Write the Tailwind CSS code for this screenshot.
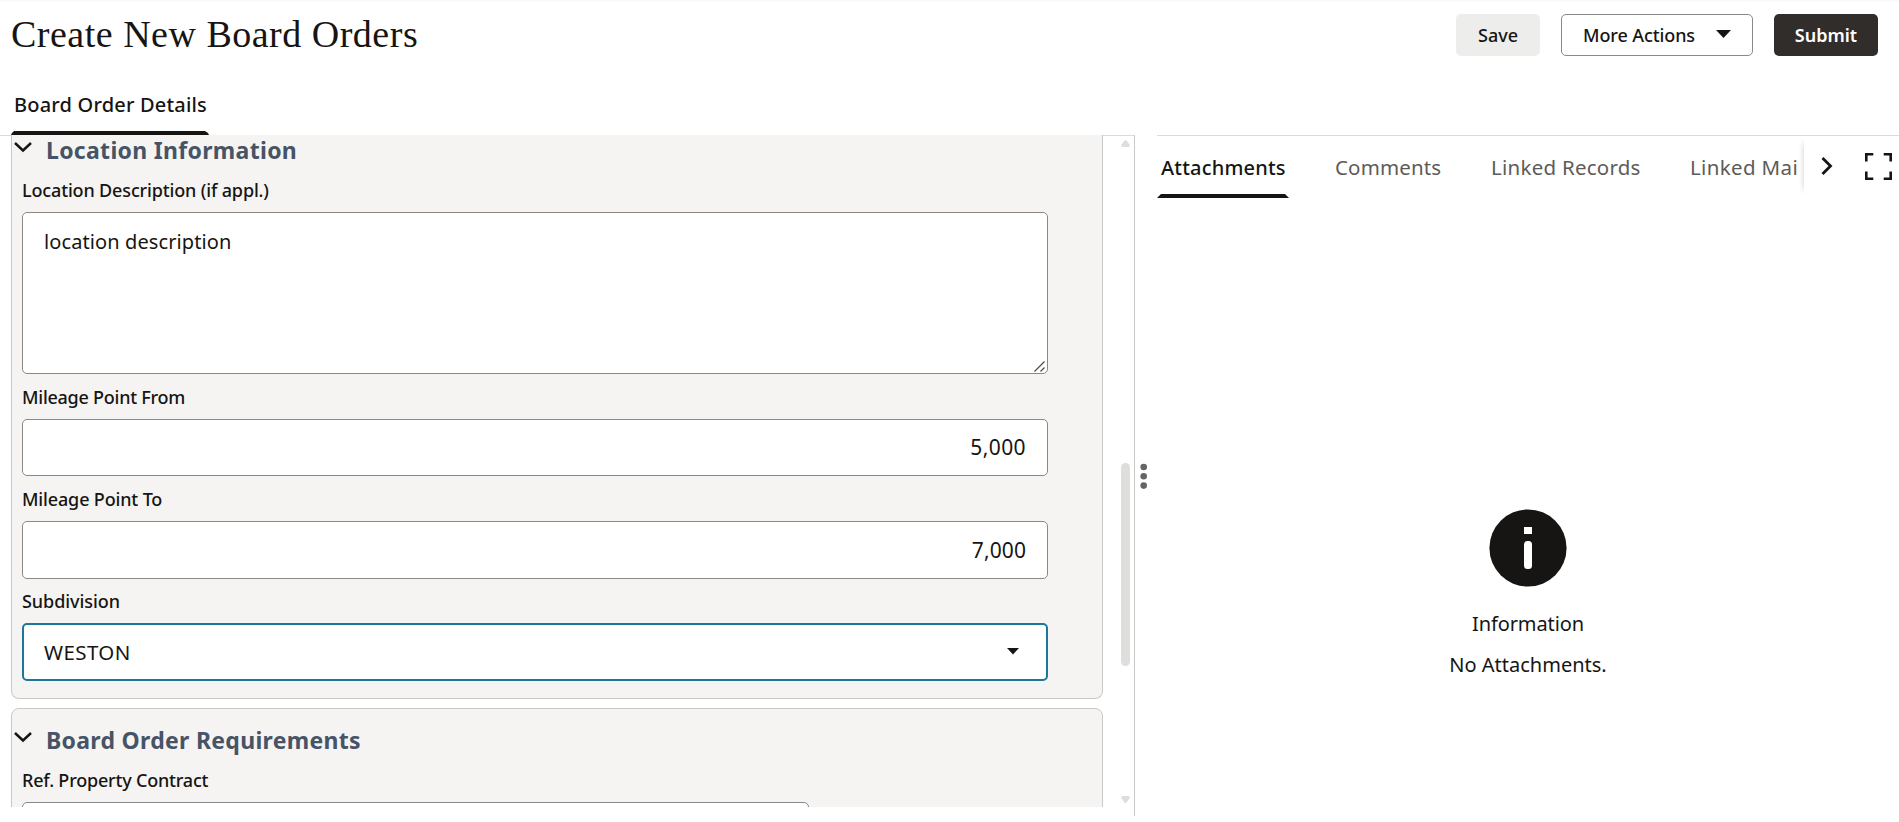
<!DOCTYPE html>
<html lang="en">
<head>
<meta charset="utf-8">
<title>Create New Board Orders</title>
<script src="https://cdn.jsdelivr.net/npm/@tailwindcss/browser@4"></script>
</head>
<body class="flex h-[822px] w-[1899px] flex-col overflow-hidden border-t-2 border-[#fafafa] bg-white font-['Noto_Sans',sans-serif] text-[#161513]">
  <!-- Page header -->
  <header class="flex h-[68px] shrink-0 items-start justify-between pt-3 pr-[21px] pl-[11px]">
    <h1 class="-mt-[3px] font-['Liberation_Serif',serif] text-[38px] leading-[47px] tracking-[0.5px] whitespace-nowrap">Create New Board Orders</h1>
    <div class="flex gap-[21px] text-lg leading-[42px] font-medium whitespace-nowrap">
      <button class="h-[42px] w-[84px] rounded-[5px] bg-[#ededeb]">Save</button>
      <button class="flex h-[42px] w-[192px] items-center justify-between rounded-[5px] border border-[#8b8886] pr-[21px] pl-[21px] tracking-[-0.1px]">
        More Actions
        <svg class="mb-[2px] h-2 w-[15px]" viewBox="0 0 15 8"><path d="M0 0h15L7.500 8z" fill="#161513"/></svg>
      </button>
      <button class="h-[42px] w-[104px] rounded-[5px] bg-[#312d2a] font-semibold text-white">Submit</button>
    </div>
  </header>

  <!-- Page tabs -->
  <nav class="flex h-[65px] shrink-0 items-end pl-[11px]">
    <div class="flex w-[198px] flex-col">
      <span class="pb-[11px] pl-[3px] text-xl leading-[30px] font-medium tracking-[0.19px] whitespace-nowrap">Board Order Details</span>
      <svg class="h-1 w-[198px]" viewBox="0 0 198 4"><path d="M0 4L1 2 3 0h191l3 2 1 2z" fill="#161513"/></svg>
    </div>
  </nav>

  <main class="flex h-[681px] shrink-0">
    <!-- Form -->
    <section class="flex w-[1135px] shrink-0 border-t border-r border-[#c8c8c8] border-t-[#dcdbda]">
      <div class="-mt-px h-[672px] w-[1103px] shrink-0 overflow-hidden pl-[11px]">
        <div class="h-[564px] rounded-b-[8px] border border-t-0 border-[#c9c8c8] bg-[#f5f4f2]">
          <div class="flex h-8 items-start">
            <svg class="mt-[6px] ml-[2px] h-3 w-[18px]" viewBox="0 0 18 12"><path d="M1 2l8 7.5L17 2" fill="none" stroke="#161513" stroke-width="2.4"/></svg>
            <h2 class="-mt-[1px] ml-[14px] text-[23px] leading-8 font-bold tracking-[0.31px] whitespace-nowrap text-[#475366]">Location Information</h2>
          </div>
          <div class="flex flex-col pl-[10px] text-lg font-medium whitespace-nowrap">
            <label class="pt-px leading-[44px] tracking-[-0.15px]">Location Description (if appl.)</label>
            <div class="flex h-[162px] w-[1026px] justify-between rounded-[5px] border border-[#8b8886] bg-white pt-[15px] pl-[21px] text-xl leading-7 font-normal tracking-[0.1px]">
              <span>location description</span>
              <svg class="mr-[2px] mb-px h-[11px] w-[11px] self-end" viewBox="0 0 11 11"><path d="M.5 10.500l10-10M6.500 10.500l4-4" fill="none" stroke="#4b4b4b" stroke-width="1.200"/></svg>
            </div>
            <label class="pt-px leading-[44px] tracking-[-0.25px]">Mileage Point From</label>
            <div class="h-[57px] w-[1026px] rounded-[5px] border border-[#8b8886] bg-white pr-[21px] text-right text-[21px] leading-[55px] font-normal tracking-[0.4px]">5,000</div>
            <label class="pt-px leading-[44px] tracking-[-0.15px]">Mileage Point To</label>
            <div class="h-[58px] w-[1026px] rounded-[5px] border border-[#8b8886] bg-white pr-[21px] text-right text-[21px] leading-[56px] font-normal tracking-[0.1px]">7,000</div>
            <label class="leading-[44px] tracking-[-0.05px]">Subdivision</label>
            <div class="flex h-[58px] w-[1026px] items-center justify-between rounded-[5px] border-2 border-[#1c7799] bg-white pt-px pr-[27px] pl-[20px] text-[20.5px] font-normal tracking-[0.4px]">
              WESTON
              <svg class="mb-[3px] h-[7px] w-3" viewBox="0 0 12 7"><path d="M0 0h12L6 6.500z" fill="#161513"/></svg>
            </div>
          </div>
        </div>
        <div class="mt-[9px] h-[200px] rounded-t-[8px] border border-[#c9c8c8] bg-[#f5f4f2] pt-4">
          <div class="flex h-8 items-start">
            <svg class="mt-[6px] ml-[2px] h-3 w-[18px]" viewBox="0 0 18 12"><path d="M1 2l8 7.5L17 2" fill="none" stroke="#161513" stroke-width="2.4"/></svg>
            <h2 class="-mt-[1px] ml-[14px] text-[23px] leading-8 font-bold tracking-[0.3px] whitespace-nowrap text-[#475366]">Board Order Requirements</h2>
          </div>
          <div class="flex flex-col pl-[10px] text-lg font-medium whitespace-nowrap">
            <label class="pt-px leading-[44px] tracking-[-0.2px]">Ref. Property Contract</label>
            <div class="h-[57px] w-[787px] rounded-[5px] border border-[#8b8886] bg-white"></div>
          </div>
        </div>
      </div>
      <!-- Scrollbar -->
      <div class="ml-[18px] flex h-[667px] w-[9px] flex-col pt-1">
        <svg class="h-[7px] w-[9px]" viewBox="0 0 9 7"><path d="M3.500.6Q4.500-.4 5.500.6L8.600 4.800Q9 7 7.500 7H1.500Q0 7 .4 4.800z" fill="#dededd"/></svg>
        <div class="mt-[316px] h-[203px] w-[9px] rounded-full bg-[#dededd]"></div>
        <svg class="mt-auto h-[7px] w-[9px]" viewBox="0 0 9 7"><path d="M3.500 6.400Q4.500 7.400 5.500 6.400L8.600 2.200Q9 0 7.500 0H1.500Q0 0 .4 2.200z" fill="#dededd"/></svg>
      </div>
    </section>

    <!-- Splitter handle -->
    <div class="flex w-[22px] shrink-0 justify-start pt-[328px] pl-[5px]">
      <svg class="h-[27px] w-2" viewBox="0 0 8 27"><g fill="#666564"><circle cx="3.700" cy="4" r="3.300"/><circle cx="3.700" cy="13.300" r="3.300"/><circle cx="3.700" cy="22.600" r="3.300"/></g></svg>
    </div>

    <!-- Record side panel -->
    <aside class="flex w-[742px] shrink-0 flex-col border-t border-[#dcdbda]">
      <div class="flex h-[62px] shrink-0">
        <div class="flex w-[642px] overflow-hidden text-[20.5px] leading-[30px] whitespace-nowrap text-[#5d5b59]">
          <div class="flex w-[132px] shrink-0 flex-col justify-between pt-[17px] font-medium text-[#161513]">
            <span class="pl-1 text-xl leading-[30px] tracking-[0.2px]">Attachments</span>
            <svg class="h-1 w-[132px]" viewBox="0 0 132 4"><path d="M0 4l4-4h124l4 4z" fill="#161513"/></svg>
          </div>
          <span class="mt-4 ml-[46px] w-[156px] shrink-0 tracking-[0.15px]">Comments</span>
          <span class="mt-4 w-[199px] shrink-0 tracking-[0.25px]">Linked Records</span>
          <span class="mt-4 tracking-[0.35px]">Linked Mail</span>
        </div>
        <div class="mt-[2px] h-[57px] w-[5px] bg-gradient-to-r from-white to-[#e8e8e8] [mask-image:linear-gradient(transparent,black_20%,black_80%,transparent)]"></div>
        <svg class="mt-[20px] ml-[17px] h-5 w-3" viewBox="0 0 12 20"><path d="M1.500 2l8 8-8 8" fill="none" stroke="#161513" stroke-width="2.800"/></svg>
        <svg class="mt-[17px] ml-[32px] h-[27px] w-[27px]" viewBox="0 0 27 27"><path d="M1.300 8.500V1.300h7M18.700 1.300h7v7.200M25.700 18.500v7.200h-7M8.300 25.700h-7v-7.200" fill="none" stroke="#161513" stroke-width="2.600"/></svg>
      </div>
      <div class="flex flex-col items-center pt-[311px] text-xl leading-[30px] whitespace-nowrap">
        <svg class="h-[78px] w-[78px]" viewBox="0 0 78 78"><circle cx="39" cy="39" r="38.600" fill="#161513"/><path d="M35 18h8v7h-8z" fill="#fff"/><rect x="35" y="32" width="8" height="28" rx="3.500" fill="#fff"/></svg>
        <span class="mt-[22px] tracking-[-0.1px]">Information</span>
        <span class="mt-[11px]">No Attachments.</span>
      </div>
    </aside>
  </main>
</body>
</html>
